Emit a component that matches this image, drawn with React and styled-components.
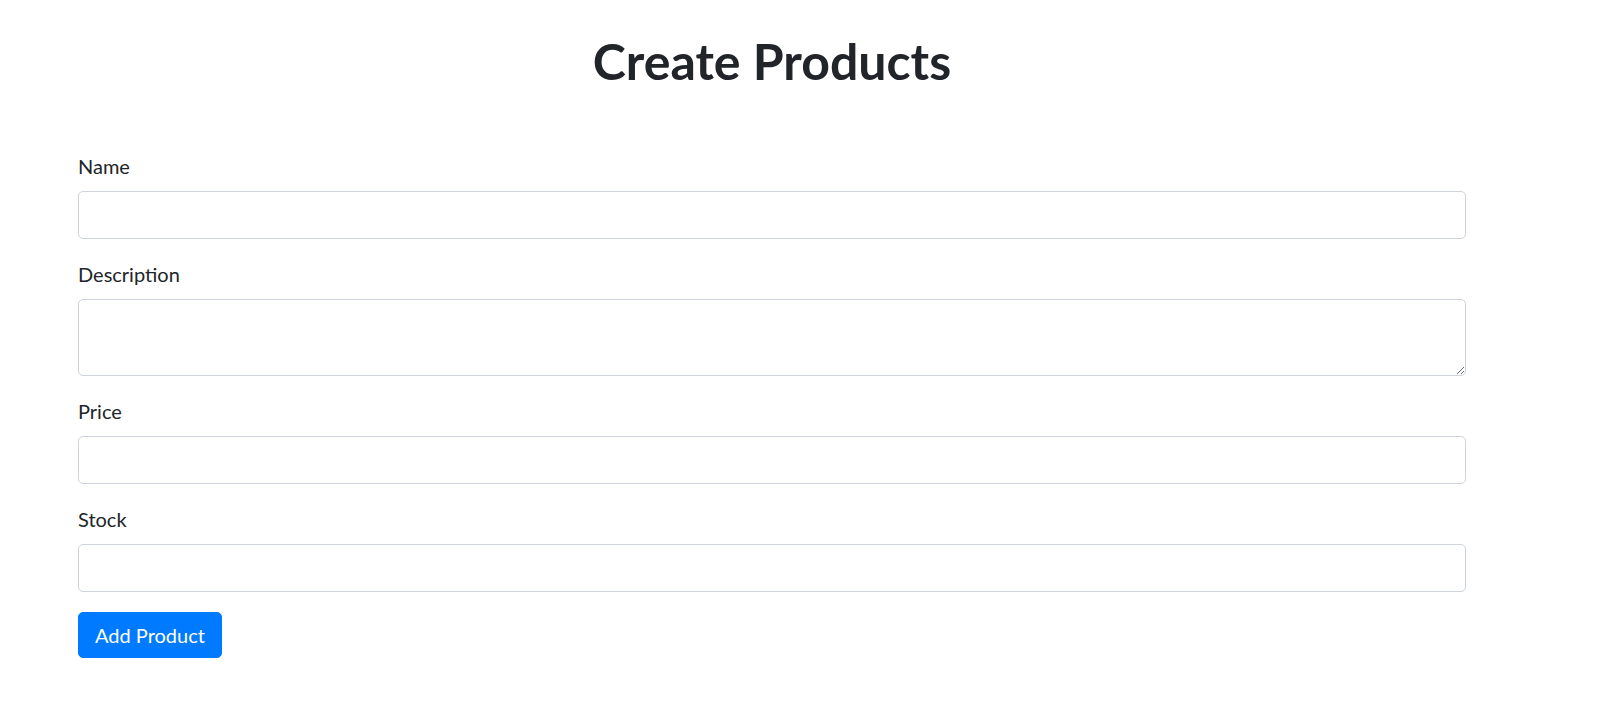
import React from 'react'
import styled, { createGlobalStyle } from 'styled-components'

const GlobalStyle = createGlobalStyle`
    * {
        box-sizing: border-box;
    }
    body {
        margin: 0;
        background: #ffffff;
        color: #212529;
        font-family: Lato, "Open Sans", Arial, sans-serif;
    }
`

const Page = styled.div`
    width: 1388px;
    margin-left: 78px;
`

const Title = styled.h1`
    margin: 31px 0 60px 0;
    font-size: 50px;
    font-weight: 700;
    line-height: 60px;
    text-align: center;
    color: #212529;
`

const Form = styled.form`
    display: flex;
    flex-direction: column;
    align-items: flex-start;
`

const Group = styled.div`
    display: flex;
    flex-direction: column;
    width: 100%;
    margin-bottom: 20px;
`

const Label = styled.label`
    font-size: 20px;
    line-height: 30px;
    margin-bottom: 10px;
    color: #212529;
`

const Input = styled.input`
    width: 100%;
    height: 48px;
    padding: 7px 15px;
    font-family: inherit;
    font-size: 20px;
    color: #495057;
    background: #ffffff;
    border: 1px solid #ced4da;
    border-radius: 5px;
    outline: none;
`

const TextArea = styled.textarea`
    width: 100%;
    height: 77px;
    padding: 7px 15px;
    font-family: inherit;
    font-size: 20px;
    color: #495057;
    background: #ffffff;
    border: 1px solid #ced4da;
    border-radius: 5px;
    resize: vertical;
    outline: none;
`

const Button = styled.button`
    height: 46px;
    padding: 0 16px;
    font-family: inherit;
    font-size: 20px;
    color: #ffffff;
    background: #007bff;
    border: 1px solid #007bff;
    border-radius: 5px;
    cursor: pointer;
`

const fields = [
    { id: 'name', label: 'Name' },
    { id: 'description', label: 'Description', multiline: true },
    { id: 'price', label: 'Price' },
    { id: 'stock', label: 'Stock' },
]

const App = () => {
    return (
        <>
            <GlobalStyle />
            <Page>
                <Title>Create Products</Title>
                <Form onSubmit={e => e.preventDefault()}>
                    {fields.map(f => (
                        <Group key={f.id}>
                            <Label htmlFor={f.id}>{f.label}</Label>
                            {f.multiline
                                ? <TextArea id={f.id} rows={2} />
                                : <Input id={f.id} type="text" />}
                        </Group>
                    ))}
                    <Button type="submit">Add Product</Button>
                </Form>
            </Page>
        </>
    )
}

export default App
